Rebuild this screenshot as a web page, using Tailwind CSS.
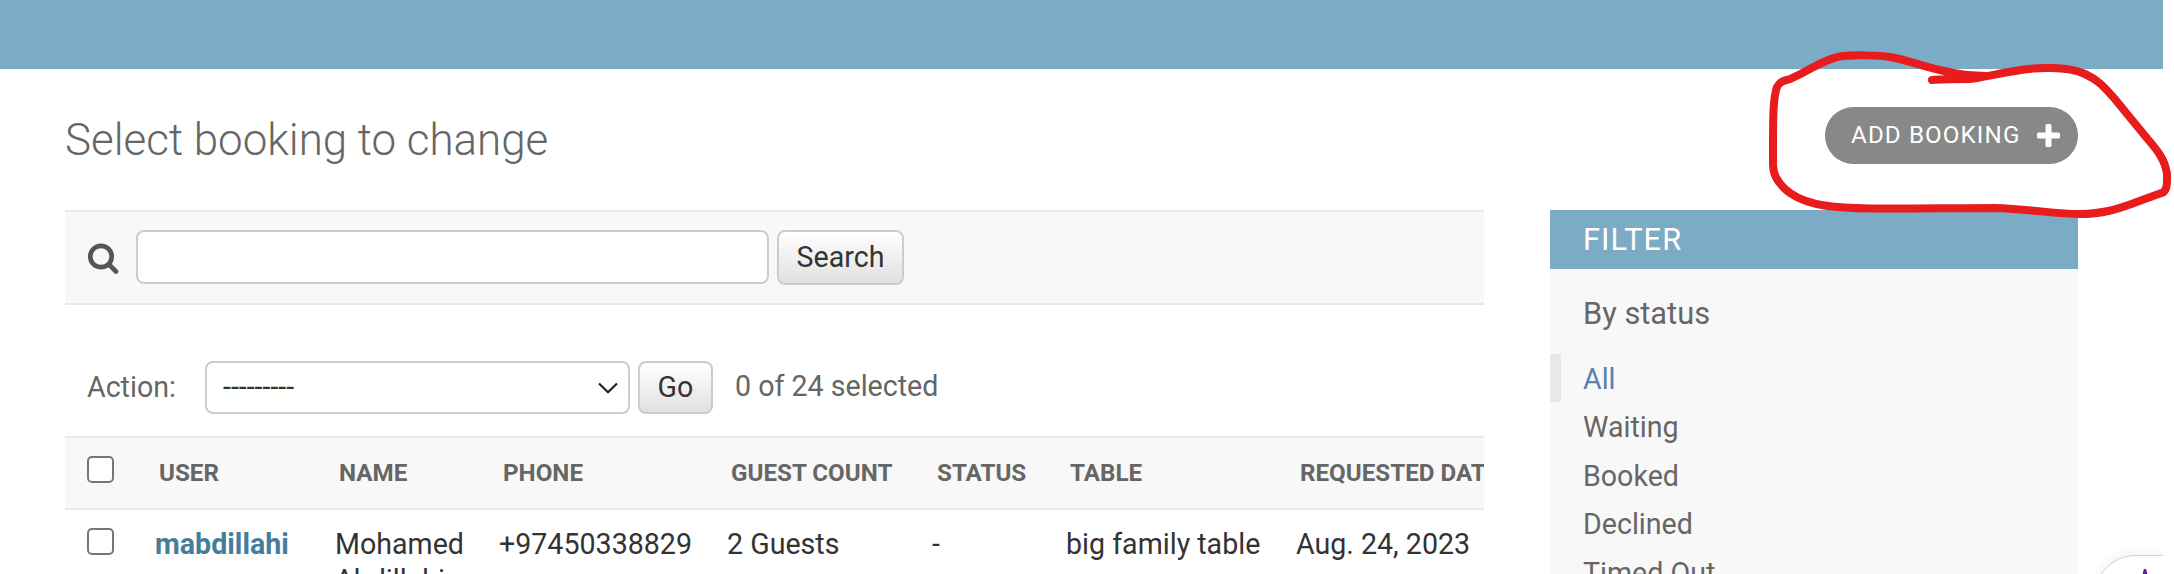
<!DOCTYPE html>
<html lang="en">
<head>
<meta charset="utf-8">
<title>Select booking to change</title>
<script src="https://cdn.jsdelivr.net/npm/@tailwindcss/browser@4"></script>
</head>
<body class="relative h-[574px] w-[2174px] overflow-hidden bg-white font-['Roboto',sans-serif] text-[28.6px] text-[#666]">
<header class="h-[69px] w-[2163px] bg-[#7cabc5]"></header>
<div class="flex h-[141px] w-[2078px] items-start justify-between pl-[65px]">
  <h1 class="pt-[45px] text-[43.9px] leading-[53px] font-light whitespace-nowrap">Select booking to change</h1>
  <a class="mt-[38px] flex h-[57px] w-[253px] items-center justify-between rounded-full bg-[#888] pr-[18px] pl-[26px] text-[24.2px] tracking-[1.1px] whitespace-nowrap text-white">
    <span>ADD BOOKING</span>
    <svg class="h-[23px] w-[23px]" viewBox="0 0 23 23" fill="#fff"><rect x="8.500" y="0" width="6" height="23" rx="1.500"/><rect x="0" y="8.500" width="23" height="6" rx="1.500"/></svg>
  </a>
</div>
<div class="flex w-[2078px] items-start justify-between pl-[65px]">
  <main class="w-[1419px] overflow-hidden">
    <form class="flex h-[95px] items-start border-y-2 border-[#e8e8e8] bg-[#f8f8f8] pt-[18px] pl-[22px]">
      <svg class="mt-[13px] h-[32px] w-[32px] shrink-0" viewBox="0 0 32 32" fill="none" stroke="#555"><circle cx="14" cy="13.500" r="10.700" stroke-width="4.700"/><path d="M22 21.500L29 28.500" stroke-width="4.600" stroke-linecap="round"/></svg>
      <div class="ml-[17px] h-[54px] w-[633px] rounded-[8px] border-2 border-[#ccc] bg-white"></div>
      <button type="button" class="ml-[8px] flex h-[55px] w-[127px] items-center justify-center rounded-[8px] border-2 border-[#ccc] bg-linear-to-b from-white to-[#e1e1e1] text-[#333]">Search</button>
    </form>
    <div class="flex h-[131px] items-start pt-[56px] pl-[22px] whitespace-nowrap">
      <span class="w-[118px] pt-[9px] leading-[34px]">Action:</span>
      <div class="flex h-[53px] w-[425px] items-center justify-between rounded-[8px] border-2 border-[#ccc] bg-white pr-[10px] pl-[16px] text-[#333]">
        <span>---------</span>
        <svg class="h-[12px] w-[20px]" viewBox="0 0 20 12" fill="none" stroke="#222" stroke-width="2.200"><path d="M1 1.500L10 10.300L19 1.500"/></svg>
      </div>
      <button type="button" class="ml-[8px] flex h-[53px] w-[75px] items-center justify-center rounded-[8px] border-2 border-[#ccc] bg-linear-to-b from-white to-[#e1e1e1] text-[#333]">Go</button>
      <span class="pt-[8px] pl-[22px] leading-[34px]">0 of 24 selected</span>
    </div>
    <div class="grid h-[74px] grid-cols-[94px_180px_164px_228px_206px_133px_230px_400px] border-y-2 border-[#e8e8e8] bg-[#f8f8f8] pt-[17px] text-[24.2px] leading-[36px] font-bold whitespace-nowrap">
      <div class="mt-[1px] ml-[22px] h-[27px] w-[27px] rounded-[5px] border-2 border-[#767676] bg-white"></div>
      <span>USER</span><span>NAME</span><span>PHONE</span><span>GUEST COUNT</span><span>STATUS</span><span>TABLE</span><span>REQUESTED DATE</span>
    </div>
    <div class="grid grid-cols-[90px_180px_164px_228px_205px_134px_230px_400px] pt-[16px] leading-[36.4px] whitespace-nowrap text-[#333]">
      <div class="mt-[2px] ml-[22px] h-[27px] w-[27px] rounded-[5px] border-2 border-[#767676] bg-white"></div>
      <a class="font-bold text-[#447e9b]">mabdillahi</a><span>Mohamed<br>Abdillahi</span><span>+97450338829</span><span>2 Guests</span><span>-</span><span>big family table</span><span>Aug. 24, 2023</span>
    </div>
  </main>
  <aside class="h-[364px] w-[528px] overflow-hidden bg-[#f8f8f8]">
    <h2 class="h-[59px] bg-[#7cabc5] pl-[33px] text-[30.8px] leading-[60px] tracking-[1.1px] text-white">FILTER</h2>
    <h3 class="h-[85px] pt-[27px] pl-[33px] text-[30.8px] leading-[36px]">By status</h3>
    <ul class="leading-[50.4px]">
      <li class="h-[48.4px] border-l-[11px] border-[#e8e8e8] pl-[22px] text-[#5b80b2]">All</li>
      <li class="h-[48.4px] pl-[33px]">Waiting</li>
      <li class="h-[48.4px] pl-[33px]">Booked</li>
      <li class="h-[48.4px] pl-[33px]">Declined</li>
      <li class="h-[48.4px] pl-[33px]">Timed Out</li>
    </ul>
  </aside>
</div>
<div class="absolute top-[540px] left-[2080px] h-[34px] w-[83px] overflow-hidden">
  <div class="absolute top-[15px] left-[15px] h-[80px] w-[120px] rounded-l-[40px] border border-[#d4d4d4] bg-white shadow-[0_0_12px_rgba(0,0,0,0.08)]"></div>
  <svg class="absolute top-[29px] left-[60px] h-[8px] w-[10px]" viewBox="0 0 10 8" fill="#5b21a6"><path d="M4 0H6L7 3L7.500 8H2.500L3 3Z"/></svg>
</div>
<svg class="pointer-events-none absolute top-0 left-0 h-[574px] w-[2174px]" viewBox="0 0 2174 574" fill="none" stroke="#e81c1c" stroke-width="8" stroke-linecap="round" stroke-linejoin="round">
  <path d="M1987 76C1977 76 1960 75 1944 71C1925 67 1907 60 1890 57C1878 55 1855 55 1843 56C1825 58 1805 73 1790 79C1784 81 1780 81 1777 87C1773 98 1773 120 1773 145L1773 165C1773 178 1782 187 1790 193C1810 207 1840 208 1870 208.500C1910 209 1950 208 1995 208C2030 209 2055 214 2080 214C2105 214 2120 208 2134 203L2160 193.500C2168 192 2167 183 2167 174C2165 158 2155 148 2146 137L2114 98C2103 86 2098 80 2085 74C2068 66 2035 67 2015 71C1995 74 1982 78 1970 79C1955 79 1940 79 1932 80"/>
</svg>
</body>
</html>
